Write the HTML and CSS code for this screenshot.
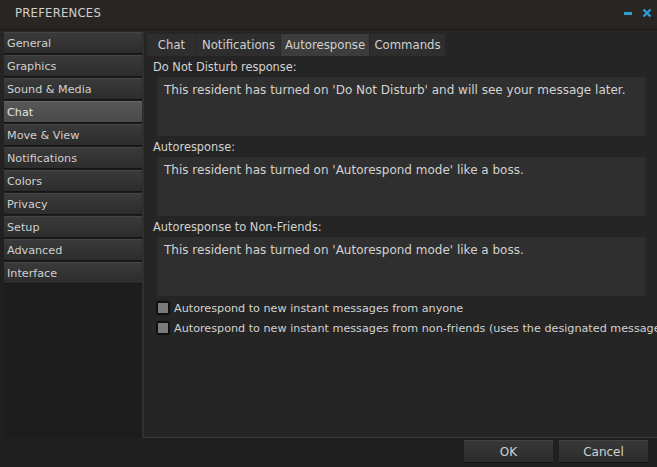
FILE: index.html
```html
<!DOCTYPE html>
<html lang="en">
<head>
  <meta charset="UTF-8" />
  <title>Preferences</title>
  <link rel="stylesheet" href="styles.css">
</head>
<body>
  <div class="window">
    <header class="titlebar">
      <span class="title">PREFERENCES</span>
      <div class="title-controls">
        <svg class="ctl" width="10" height="10" viewBox="0 0 10 10"><rect x="1" y="4" width="8" height="3" fill="#2a9fd0"/></svg>
        <svg class="ctl" width="10" height="10" viewBox="0 0 10 10"><path d="M1.5 1.5 L8.5 8.5 M8.5 1.5 L1.5 8.5" stroke="#2a9fd0" stroke-width="2.4"/></svg>
      </div>
    </header>
    <div class="body">
      <nav class="sidebar">
        <a class="side-btn">General</a>
        <a class="side-btn">Graphics</a>
        <a class="side-btn">Sound &amp; Media</a>
        <a class="side-btn active">Chat</a>
        <a class="side-btn">Move &amp; View</a>
        <a class="side-btn">Notifications</a>
        <a class="side-btn">Colors</a>
        <a class="side-btn">Privacy</a>
        <a class="side-btn">Setup</a>
        <a class="side-btn">Advanced</a>
        <a class="side-btn">Interface</a>
      </nav>
      <section class="panel">
        <div class="tabs">
          <span class="tab tab-chat">Chat</span>
          <span class="tab tab-notif">Notifications</span>
          <span class="tab tab-auto active">Autoresponse</span>
          <span class="tab tab-cmd">Commands</span>
        </div>
        <div class="field">
          <label>Do Not Disturb response:</label>
          <div class="textbox">This resident has turned on 'Do Not Disturb' and will see your message later.</div>
        </div>
        <div class="field">
          <label>Autoresponse:</label>
          <div class="textbox">This resident has turned on 'Autorespond mode' like a boss.</div>
        </div>
        <div class="field">
          <label>Autoresponse to Non-Friends:</label>
          <div class="textbox">This resident has turned on 'Autorespond mode' like a boss.</div>
        </div>
        <div class="checks">
          <div class="check"><span class="box"></span>Autorespond to new instant messages from anyone</div>
          <div class="check"><span class="box"></span>Autorespond to new instant messages from non-friends (uses the designated message)</div>
        </div>
      </section>
    </div>
    <footer class="footer">
      <button class="btn">OK</button>
      <button class="btn">Cancel</button>
    </footer>
  </div>
</body>
</html>
```

FILE: styles.css
```css
body {
  margin: 0;
  font-family: 'DejaVu Sans', sans-serif;
  font-size: 12px;
  color: #d2d2d2;
  background: #1e1e1e;
  overflow: hidden;
}
.window {
  width: 657px;
  height: 467px;
  display: flex;
  flex-direction: column;
  background: linear-gradient(180deg, #2a2624 0%, #222120 40%, #1f1f1f 100%);
  overflow: hidden;
}
.titlebar {
  height: 30px;
  flex: none;
  display: flex;
  align-items: center;
  justify-content: space-between;
  padding: 0 5px 0 15px;
  border-bottom: 1px solid #1a1918;
  box-sizing: border-box;
}
.title {
  font-size: 11.7px;
  letter-spacing: 0.2px;
  color: #cfcfcf;
  padding-bottom: 3px;
}
.title-controls {
  display: flex;
  gap: 9px;
  padding-bottom: 3px;
}
.ctl {
  display: block;
}
.body {
  flex: 1;
  display: flex;
  padding: 2px 0 0 4px;
  min-height: 0;
}
.sidebar {
  width: 138px;
  flex: none;
  display: flex;
  flex-direction: column;
  gap: 1px;
  background: #1d1d1d;
  border-right: 1px solid #2a2a2a;
}
.side-btn {
  height: 22px;
  line-height: 21px;
  padding-left: 3px;
  box-sizing: border-box;
  font-size: 11.2px;
  background: linear-gradient(180deg, #3a3a3a 0%, #2c2c2c 100%);
  border-top: 1px solid #444;
  border-bottom: 1px solid #151515;
  color: #d0d0d0;
  white-space: nowrap;
}
.side-btn.active {
  background: linear-gradient(180deg, #575757 0%, #4a4a4a 100%);
  border-top-color: #666;
  color: #e4e4e4;
}
.panel {
  flex: 1;
  min-width: 0;
  background: #252525;
  border-left: 1px solid #333;
  border-bottom: 1px solid #3a3a3a;
  padding: 2px 12px 0 3px;
  display: flex;
  flex-direction: column;
}
.tabs {
  display: flex;
  height: 22px;
  margin-bottom: 1px;
  font-size: 11.7px;
}
.tab {
  line-height: 22px;
  text-align: center;
  background: #2e2e2e;
  border-right: 1px solid #262626;
  color: #d0d0d0;
  white-space: nowrap;
}
.tab-chat { width: 49px; }
.tab-notif { width: 83px; }
.tab-auto { width: 88px; }
.tab-cmd { width: 75px; }
.tab.active {
  background: #3c3c3c;
}
.field label {
  display: block;
  padding-left: 6px;
  height: 20px;
  line-height: 20px;
  font-size: 11.4px;
}
.textbox {
  margin-left: 10px;
  height: 59px;
  box-sizing: border-box;
  background: #2f2f2f;
  padding: 6px 7px;
  margin-bottom: 1px;
  white-space: nowrap;
}
.checks {
  margin-top: 4px;
  display: flex;
  flex-direction: column;
  gap: 6px;
  white-space: nowrap;
  margin-right: -12px;
  overflow: hidden;
  font-size: 11.2px;
}
.check {
  display: flex;
  align-items: center;
  gap: 4px;
  height: 14px;
  padding-left: 9px;
}
.box {
  width: 10px;
  height: 10px;
  background: #7a7a7a;
  border: 2px solid #101010;
  border-radius: 2px;
  flex: none;
}
.footer {
  height: 29px;
  flex: none;
  display: flex;
  justify-content: flex-end;
  align-items: flex-start;
  gap: 6px;
  padding: 2px 9px 0 0;
  box-sizing: border-box;
}
.btn {
  width: 89px;
  height: 23px;
  font-family: inherit;
  font-size: 12px;
  color: #d0d0d0;
  background: linear-gradient(180deg, #383838 0%, #2c2c2c 100%);
  border: none;
  border-top: 1px solid #444;
  border-bottom: 1px solid #151515;
}
```
